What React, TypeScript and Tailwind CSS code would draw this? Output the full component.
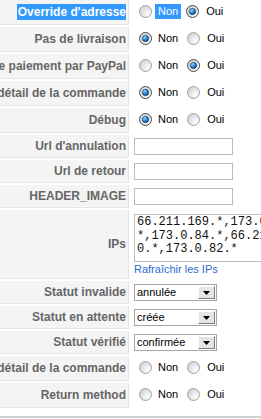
import React from "react";

type RadioValue = "non" | "oui" | null;

type Row =
  | { kind: "radio"; label: string; value: RadioValue; selected?: boolean }
  | { kind: "text"; label: string }
  | { kind: "ips"; label: string }
  | { kind: "select"; label: string; value: string };

const rows: Row[] = [
  { kind: "radio", label: "Override d'adresse", value: "oui", selected: true },
  { kind: "radio", label: "Pas de livraison", value: "non" },
  { kind: "radio", label: "Mode de paiement par PayPal", value: "oui" },
  { kind: "radio", label: "Afficher le détail de la commande", value: "non" },
  { kind: "radio", label: "Débug", value: "non" },
  { kind: "text", label: "Url d'annulation" },
  { kind: "text", label: "Url de retour" },
  { kind: "text", label: "HEADER_IMAGE" },
  { kind: "ips", label: "IPs" },
  { kind: "select", label: "Statut invalide", value: "annulée" },
  { kind: "select", label: "Statut en attente", value: "créée" },
  { kind: "select", label: "Statut vérifié", value: "confirmée" },
  { kind: "radio", label: "Envoyer le détail de la commande", value: null },
  { kind: "radio", label: "Return method", value: null },
];

const IPS = "66.211.169.*,173.0.81.*,173.0.84.*,66.211.170.*,173.0.82.*";

function Radio({ checked }: { checked: boolean }) {
  return (
    <svg width="13" height="13" viewBox="0 0 13 13" className="shrink-0">
      <defs>
        <radialGradient id="off" cx="0.7" cy="0.7" r="0.8">
          <stop offset="0" stopColor="#ffffff" />
          <stop offset="1" stopColor="#cfcfcf" />
        </radialGradient>
        <radialGradient id="dot" cx="0.35" cy="0.3" r="0.8">
          <stop offset="0" stopColor="#9fd8ff" />
          <stop offset="0.5" stopColor="#2a86cf" />
          <stop offset="1" stopColor="#0b3f75" />
        </radialGradient>
      </defs>
      <circle cx="6.5" cy="6.5" r="6" fill="url(#off)" stroke={checked ? "#4a4a4a" : "#a2a2a2"} strokeWidth="1" />
      {checked && <circle cx="6.5" cy="6.5" r="3.2" fill="url(#dot)" stroke="#123c66" strokeWidth="0.6" />}
    </svg>
  );
}

function RadioPair({ value, selected }: { value: RadioValue; selected?: boolean }) {
  return (
    <div className="flex items-center pl-[8px] pt-[4px] text-[11px] text-black">
      <Radio checked={value === "non"} />
      <span
        className={
          selected
            ? "ml-[3px] px-[3px] leading-[15px] bg-[#3399ff] text-white"
            : "ml-[6px] leading-[15px]"
        }
      >
        Non
      </span>
      <span className={selected ? "ml-[5px]" : "ml-[9px]"}>
        <Radio checked={value === "oui"} />
      </span>
      <span className="ml-[7px] leading-[15px]">Oui</span>
    </div>
  );
}

function SelectBox({ value }: { value: string }) {
  return (
    <div className="ml-[3px] flex h-[17px] w-[83px] items-center justify-between border border-[#a5a5a5] bg-white">
      <span className="pl-[2px] text-[11px] leading-[13px] text-black">{value}</span>
      <span className="mr-[1px] flex h-[13px] w-[17px] items-center justify-center border border-t-white border-l-white border-b-[#7a7a7a] border-r-[#7a7a7a] bg-[#e4e4e4]">
        <svg width="7" height="4" viewBox="0 0 7 4">
          <polygon points="0,0 7,0 3.5,4" fill="#000" />
        </svg>
      </span>
    </div>
  );
}

export default function App() {
  return (
    <div
      className="h-[419px] w-[261px] overflow-hidden bg-white"
      style={{ fontFamily: '"Liberation Sans", Arial, sans-serif' }}
    >
      <div className="flex flex-col gap-[2px]">
        {rows.map((row, i) => {
          const h =
            row.kind === "radio"
              ? "h-[25px]"
              : row.kind === "ips"
              ? "h-[69px]"
              : "h-[23px]";
          return (
            <div key={i} className={`flex gap-[2px] ${h}`}>
              <div className="flex w-[129px] shrink-0 items-center justify-end overflow-hidden whitespace-nowrap border-b border-r border-[#e4e4e4] bg-[#f4f4f4] pr-[2px] text-[12px] font-bold text-[#666]">
                {row.kind === "radio" && row.selected ? (
                  <span className="bg-[#3399ff] pl-[1px] leading-[16px] text-white">{row.label}</span>
                ) : (
                  <span>{row.label}</span>
                )}
              </div>
              <div className="flex min-w-0 flex-1 items-start">
                {row.kind === "radio" && <RadioPair value={row.value} selected={row.selected} />}
                {row.kind === "text" && (
                  <div className="flex h-full items-center">
                    <input
                      type="text"
                      readOnly
                      className="ml-[3px] h-[17px] w-[99px] border border-[#bbbbbb] bg-white outline-none"
                    />
                  </div>
                )}
                {row.kind === "select" && (
                  <div className="flex h-full items-center">
                    <SelectBox value={row.value} />
                  </div>
                )}
                {row.kind === "ips" && (
                  <div className="flex flex-col pl-[3px] pt-[4px]">
                    <textarea
                      readOnly
                      value={IPS}
                      className="h-[48px] w-[166px] shrink-0 resize-none overflow-hidden border border-[#bbbbbb] bg-white px-[2px] pt-[1px] text-[12px] leading-[13.5px] text-[#111] outline-none"
                      style={{ fontFamily: '"Liberation Mono", "Courier New", monospace' }}
                    />
                    <a className="mt-[1px] text-[11px] leading-[13px] text-[#2a6ad0]">Rafraîchir les IPs</a>
                  </div>
                )}
              </div>
            </div>
          );
        })}
      </div>
      <div className="mt-[8px] h-[2px] bg-[#d0d0d0]" />
    </div>
  );
}
